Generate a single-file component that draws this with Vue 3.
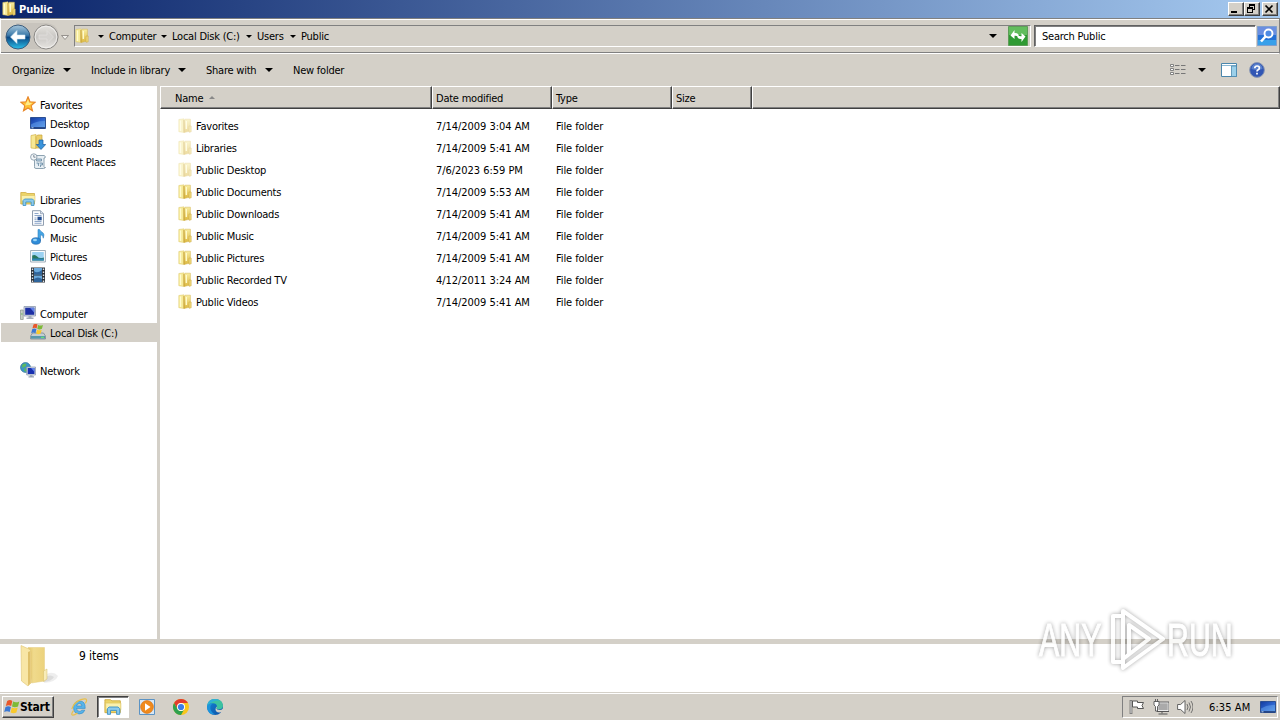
<script setup>
import { ref } from 'vue'

const selected = ref('Local Disk (C:)')
const search = ref('Search Public')

const crumbs = [
  { label: 'Computer', width: 47 },
  { label: 'Local Disk (C:)', width: 69 },
  { label: 'Users', width: 28 },
  { label: 'Public', width: 28 },
]

const groups = [
  { name: 'Favorites', icon: 'star', items: [
    { name: 'Desktop', icon: 'desktop' },
    { name: 'Downloads', icon: 'downloads' },
    { name: 'Recent Places', icon: 'recent' },
  ] },
  { name: 'Libraries', icon: 'library', items: [
    { name: 'Documents', icon: 'document' },
    { name: 'Music', icon: 'music' },
    { name: 'Pictures', icon: 'picture' },
    { name: 'Videos', icon: 'video' },
  ] },
  { name: 'Computer', icon: 'computer', items: [
    { name: 'Local Disk (C:)', icon: 'disk' },
  ] },
  { name: 'Network', icon: 'network', items: [] },
]

const files = [
  { name: 'Favorites', date: '7/14/2009 3:04 AM', hidden: true },
  { name: 'Libraries', date: '7/14/2009 5:41 AM', hidden: true },
  { name: 'Public Desktop', date: '7/6/2023 6:59 PM', hidden: true },
  { name: 'Public Documents', date: '7/14/2009 5:53 AM' },
  { name: 'Public Downloads', date: '7/14/2009 5:41 AM' },
  { name: 'Public Music', date: '7/14/2009 5:41 AM' },
  { name: 'Public Pictures', date: '7/14/2009 5:41 AM' },
  { name: 'Public Recorded TV', date: '4/12/2011 3:24 AM' },
  { name: 'Public Videos', date: '7/14/2009 5:41 AM' },
]

const pinned = ['ie', 'library', 'player', 'chrome', 'edge']
</script>

<template>
  <div class="screen">
    <!-- icon sprite -->
    <svg class="sprite" width="0" height="0">
      <defs>
        <linearGradient id="g-blue" x1="0" y1="0" x2="0" y2="1">
          <stop offset="0" stop-color="#a9c8dc" /><stop offset=".42" stop-color="#3f7cab" />
          <stop offset=".52" stop-color="#0b4a86" /><stop offset="1" stop-color="#2cc0ea" />
        </linearGradient>
        <linearGradient id="g-grey" x1="0" y1="0" x2="0" y2="1">
          <stop offset="0" stop-color="#e6e4e0" /><stop offset=".5" stop-color="#c8c6c3" /><stop offset="1" stop-color="#e8e6e2" />
        </linearGradient>
        <linearGradient id="g-folder" x1="0" y1="0" x2="0" y2="1">
          <stop offset="0" stop-color="#f8eda0" /><stop offset="1" stop-color="#dcb840" />
        </linearGradient>
        <linearGradient id="g-big" x1="0" y1="0" x2="1" y2="0">
          <stop offset="0" stop-color="#e2c468" /><stop offset=".35" stop-color="#f0da8c" /><stop offset="1" stop-color="#ecd27c" />
        </linearGradient>
        <linearGradient id="g-screen" x1="0" y1="0" x2="1" y2="1">
          <stop offset="0" stop-color="#143a9c" /><stop offset=".5" stop-color="#2b62cc" /><stop offset="1" stop-color="#5fa0e8" />
        </linearGradient>
        <linearGradient id="g-edge" x1="0" y1="0" x2="1" y2="1">
          <stop offset="0" stop-color="#1587d8" /><stop offset="1" stop-color="#0c4fa4" />
        </linearGradient>
      </defs>
      <symbol id="i-folder" viewBox="0 0 16 16">
        <path d="M1.800 1.500 7 .8v13.700l-5.200-.8z" fill="#f6ea98" stroke="#dcc668" stroke-width=".5" />
        <path d="M7 2.500 8 1.200h5.400V13L7 14.600z" fill="url(#g-folder)" stroke="#d2b24c" stroke-width=".5" />
        <path d="M7 2v12.300" stroke="#c49c30" stroke-width=".8" />
        <path d="M12 8h2.200v5.800l-2.200.5z" fill="#efd878" stroke="#c9a740" stroke-width=".5" />
        <path d="M3.500 2.500v10.500M9.300 3v8" stroke="#fffbd0" stroke-width="1.300" />
      </symbol>
      <symbol id="i-star" viewBox="0 0 16 16">
        <path d="M8 .8l2 4.900 5.200.5-4 3.400 1.300 5.200L8 12l-4.500 2.800 1.300-5.200-4-3.400 5.200-.5z" fill="#ffc136" stroke="#e8862a" stroke-width="1.100" />
        <path d="M8 3.500l1.200 3.200 3 .4-2.500 2L8 9 5 9.500z" fill="#ffeb8a" />
      </symbol>
      <symbol id="i-desktop" viewBox="0 0 16 16">
        <path d="M.5 2.500h15v11H.5z" fill="url(#g-screen)" stroke="#2c4f92" />
        <path d="M1 9.500q6-4 14-3.500v6H1z" fill="#6aa6ec" opacity=".5" />
        <path d="M1 12.800h14" stroke="#1c3468" /><path d="M1.500 12.800h2" stroke="#b8d6f4" />
      </symbol>
      <symbol id="i-downloads" viewBox="0 0 16 16">
        <path d="M1 1.500 6 .5v14L1 14z" fill="#f7e894" stroke="#d2b34a" stroke-width=".7" />
        <path d="M6 2.500 7.500 1H12v13H6z" fill="#eccf6a" stroke="#c9a437" stroke-width=".7" />
        <path d="M9 6h4v4.500h2.700l-4.700 5-4.700-5H9z" fill="#3a94dc" stroke="#1b5c9e" stroke-width=".7" />
      </symbol>
      <symbol id="i-recent" viewBox="0 0 16 16">
        <path d="M4.500 2.500h9.500q2 .5 1 2.500h-1v8.500q0 1.500 1.500 1-1 1-2 1H6q-2 0-1.500-2z" fill="#e8eff4" stroke="#8298a8" stroke-width=".9" />
        <path d="M6.500 6h5v2h-5zM6.500 10h2v3M9.500 10h3v2h-2v2" fill="#bed6e8" stroke="#6989a0" stroke-width=".8" />
        <circle cx="3.800" cy="4" r="3.200" fill="#f4f7f9" stroke="#8b9dab" stroke-width=".9" />
        <path d="M3.800 2v2.200H5.500" fill="none" stroke="#5f7080" stroke-width=".8" />
      </symbol>
      <symbol id="i-library" viewBox="0 0 16 16">
        <path d="M.8 3V1.500h5l1.200 1h7.500V13H.8z" fill="#ecd468" stroke="#cfab42" stroke-width=".8" />
        <path d="M1.500 4.500h13.500v6H1.500z" fill="#faf0ad" stroke="#d9bf58" stroke-width=".5" />
        <path d="M3 14.500V9.500l1.500-1.500h8l1.500 1.500v5h-2.800V11H5.800v3.500z" fill="#8ccaec" stroke="#398fc4" stroke-width=".8" />
      </symbol>
      <symbol id="i-document" viewBox="0 0 16 16">
        <path d="M2.500.7h8l3 3v11.600h-11z" fill="#fafcfe" stroke="#8494a8" stroke-width=".9" />
        <path d="M10.500.7v3h3" fill="#d8e2ee" stroke="#8494a8" stroke-width=".7" />
        <path d="M4.500 3.500h4M4.500 5.500h7M4.500 11.500h7M4.500 13.300h7M4.500 8h2M4.500 9.700h2" stroke="#7492bc" stroke-width=".8" />
        <path d="M7.500 6.700h4.200v3.600H7.500z" fill="#244f92" />
      </symbol>
      <symbol id="i-music" viewBox="0 0 16 16">
        <path d="M8 12V.5h1.500q1.200 2.200 3.300 3.200 2 1.400.5 5.500.2-3-2.800-3.500v6z" fill="#45a5e4" stroke="#2f80c0" stroke-width=".6" />
        <ellipse cx="6" cy="12" rx="4.500" ry="3.300" fill="#2f8cd8" stroke="#1b62a6" stroke-width=".6" />
        <ellipse cx="5" cy="11" rx="2" ry="1.200" fill="#9ad4f6" />
      </symbol>
      <symbol id="i-picture" viewBox="0 0 16 16">
        <path d="M.6 2.500h14.800v11.500H.6z" fill="#fcfdfe" stroke="#8a9aa8" stroke-width=".8" />
        <path d="M2.200 4h11.600v8.500H2.200z" fill="#9cd2f2" />
        <path d="M2.200 7.500q3-1.500 5 1t6.600 1V12.500H2.200z" fill="#28765c" />
        <path d="M2.200 10.500h11.600v2H2.200z" fill="#2f86b8" />
      </symbol>
      <symbol id="i-video" viewBox="0 0 16 16">
        <path d="M1 .5h14v15H1z" fill="#2b3038" />
        <path d="M4 1h8v6.500H4zM4 8.500h8V15H4z" fill="#6aa9dc" />
        <path d="M4 4q3 3 8-1v4.500H4zM4 12q4-3 8 0v3H4z" fill="#2f659c" />
        <path d="M2.500 1.500v14M13.500 1.500v14" stroke="#dfe5ea" stroke-width="1.400" stroke-dasharray="1.500 1.500" />
      </symbol>
      <symbol id="i-computer" viewBox="0 0 16 16">
        <path d="M.5 5h2.700v9.500H.5z" fill="#c8d0c6" stroke="#87928a" stroke-width=".7" /><path d="M1.200 9h1.300" stroke="#53b04c" />
        <path d="M4 1.500h11.500v9.500H4z" fill="#d5dbe4" stroke="#8c98ac" stroke-width=".8" />
        <path d="M5.200 2.700h9.100v7.100H5.200z" fill="#1c2fa4" /><path d="M10 2.700h4.300v5z" fill="#6080e4" />
        <path d="M8.500 11h3v1.500h2V14h-7v-1.500h2z" fill="#a3acba" />
      </symbol>
      <symbol id="i-flag4" viewBox="0 0 16 16">
        <path d="M3.200 2Q6 .2 8.300 2L7.200 7Q4.700 5.300 1.800 7z" fill="#e8572a" />
        <path d="M9.100 2.600q2.900 1.600 6.200-.2L14 7.500Q10.800 9 8 7.500z" fill="#7dba38" />
        <path d="M1.500 8Q4.300 6.300 6.900 8L5.700 13Q3 11.300.2 13z" fill="#3a78d4" />
        <path d="M7.800 8.500q2.800 1.600 5.900.1L12.400 13.500q-2.900 1.600-5.800 0z" fill="#f9c92c" />
      </symbol>
      <symbol id="i-disk" viewBox="0 0 16 16">
        <path d="M2.500 9h11l2 3v3H.6v-3z" fill="#c4cdd2" stroke="#6e7f8a" stroke-width=".7" />
        <path d="M1 12h14v2.600H1z" fill="#5798ac" /><path d="M11 13.300h3" stroke="#6cf06c" />
        <use href="#i-flag4" x="1" y="-1" width="12.500" height="12.500" />
      </symbol>
      <symbol id="i-network" viewBox="0 0 16 16">
        <circle cx="5.500" cy="5.500" r="5" fill="#3c95c8" stroke="#23688c" stroke-width=".6" />
        <path d="M2 3q2.500-2.500 4.500-1l-1 2.500-3 1.500zM5 6l3.500 1-2 3L4 9z" fill="#5cba60" />
        <path d="M6.700 5h8.800v8H6.700z" fill="#d8dee6" stroke="#8794aa" stroke-width=".7" />
        <path d="M7.700 6h6.800v6H7.700z" fill="#1830b0" /><path d="M11 6h3.500v4z" fill="#5f82ea" />
        <path d="M10 13.200h2.500v1H14v1.200H8.500v-1.200H10z" fill="#98a3b2" />
      </symbol>
      <symbol id="i-ie" viewBox="0 0 18 18">
        <path d="M15.200 10.400H6.500q.2 3 3 3 1.600 0 2.300-1.200h3q-1.300 3.700-5.300 3.700-5.900 0-5.900-6.400t6-6.500q5.900 0 5.600 7.400zM6.600 8h5.400q-.2-2.500-2.600-2.500T6.600 8z" fill="#58b4ea" stroke="#2c88c8" stroke-width=".6" />
        <path d="M3.500 12.500Q.8 16.500 2.300 17q1.700.5 5.200-2M1.800 11Q4 4 11 1.600q5.500-1.900 5.600.6 0 1.300-1.400 3.200" fill="none" stroke="#e8c04c" stroke-width="1.200" />
      </symbol>
      <symbol id="i-player" viewBox="0 0 18 18">
        <path d="M1.500 1.500h15v15h-15z" fill="#d8e7f4" stroke="#5b93c4" />
        <circle cx="9" cy="9" r="6.400" fill="#f08a1c" stroke="#d0690c" stroke-width=".6" />
        <path d="M7 5.300 12.500 9 7 12.700z" fill="#fff" />
      </symbol>
      <symbol id="i-chrome" viewBox="0 0 18 18">
        <circle cx="9" cy="9" r="8" fill="#f9c61c" />
        <path d="M2.070 5A8 8 0 0 1 15.930 5H9a4 4 0 0 0-3.460 6z" fill="#e23b2e" />
        <path d="M2.070 5A8 8 0 0 0 9 17l3.460-6a4 4 0 0 1-6.920 0z" fill="#2fa14f" />
        <circle cx="9" cy="9" r="4" fill="#fff" /><circle cx="9" cy="9" r="3.100" fill="#3b7de8" />
      </symbol>
      <symbol id="i-edge" viewBox="0 0 18 18">
        <circle cx="9" cy="9" r="8" fill="url(#g-edge)" />
        <path d="M1.200 8Q2 1.200 9 1q7.500.3 8 6.500 0 3.500-3.500 3.800-2.800.2-3.300-1 .8-.8.8-2Q10.500 5.500 7 5.300 3 5.200 1.200 8z" fill="#3cc2a0" />
        <path d="M1.200 8Q2 1.200 9 1q3 .1 5 1.500Q6 2 1.200 8z" fill="#2fb0d8" />
        <path d="M1.200 8Q3 5.200 7 5.300q-3 1.600-2.600 5.200.6 4 5 6Q1.500 17 1 9z" fill="#1c94dc" />
        <path d="M10.200 10.300q.4 1.600 3.300 1.600 2 0 3.500-1.200v2.500q-2 1.500-4 1.300-3.500-.4-3.500-3.300 0-1.500 1.500-2.800 0 1-.8 1.900z" fill="#d4d0c8" />
      </symbol>
    </svg>

    <header class="titlebar">
      <svg class="ico"><use href="#i-folder" /></svg>
      <span class="caption">Public</span>
      <div class="winbtns">
        <button class="winbtn"><svg viewBox="0 0 12 10"><path d="M2 7h6v2H2z" /></svg></button>
        <button class="winbtn"><svg viewBox="0 0 12 10"><path d="M4 0h6v6H8V5h1V2H5v1H4zM2 3h6v6H2zM3 5v3h4V5z" fill-rule="evenodd" /></svg></button>
        <button class="winbtn close"><svg viewBox="0 0 12 10"><path d="M2.500 1.500l7 7M9.500 1.500l-7 7" stroke="#000" stroke-width="1.700" /></svg></button>
      </div>
    </header>

    <nav class="navbar">
      <svg class="travel" viewBox="0 0 70 32">
        <path d="M16 3h30q12 1 13 13-1 13-13 13H16z" fill="#bdbab4" opacity=".55" />
        <circle cx="18" cy="17" r="12" fill="url(#g-blue)" stroke="#3c5c7c" />
        <path d="M10.500 17l6.500-6.500v4.500h8v4h-8v4.500z" fill="#fff" stroke="#d2e6f4" stroke-width=".6" />
        <circle cx="46" cy="17" r="12" fill="url(#g-grey)" stroke="#8b8986" />
        <circle cx="46" cy="17" r="10.800" fill="none" stroke="#f4f3f1" stroke-width=".8" />
        <path d="M53.500 17L47 10.500V15h-8v4h8v4.500z" fill="#d4d2cf" stroke="#e4e2df" stroke-width=".7" />
        <path d="M61.500 15.500h7l-3.500 4z" fill="#f4f2ee" stroke="#8c8984" stroke-width=".9" />
      </svg>
      <div class="address">
        <svg class="ico"><use href="#i-folder" /></svg>
        <span v-for="crumb in crumbs" :key="crumb.label" class="crumb">
          <i class="caret small"></i>
          <span :style="{ width: crumb.width + 'px' }">{{ crumb.label }}</span>
        </span>
        <i class="caret drop"></i>
        <svg class="refresh" viewBox="0 0 20 20">
          <path d="M.5.500h19v19H.5z" fill="#2f9a33" stroke="#5d9c58" /><path d="M1 1h18v8H1z" fill="#62bd5e" />
          <path d="M2.500 9.500l4-5.500v3q4.500-.5 4.500 4.500-1.500-2-4.500-1.700v3.200zM17.500 10.500l-4 5.500v-3q-4.500.5-4.500-4.500 1.500 2 4.500 1.700V7z" fill="#fff" />
        </svg>
      </div>
      <input v-model="search" class="search" type="text">
      <svg class="go" viewBox="0 0 20 20">
        <path d="M.5.500h19v19H.5z" fill="#2470d6" stroke="#7f9fcc" /><path d="M1 1h18v8H1z" fill="#6a8ee0" /><path d="M1 14h18v5H1z" fill="#38a0ea" />
        <circle cx="11.500" cy="7.500" r="4" fill="#4f8be4" stroke="#fff" stroke-width="1.900" /><path d="M8.500 10.500l-4.500 5" stroke="#fff" stroke-width="2.600" />
      </svg>
    </nav>

    <div class="toolbar">
      <button class="tool organize">Organize<i class="caret"></i></button>
      <button class="tool include">Include in library<i class="caret"></i></button>
      <button class="tool share">Share with<i class="caret"></i></button>
      <button class="tool">New folder</button>
      <div class="viewtools">
        <svg class="views" viewBox="0 0 16 14">
          <path d="M.5 1.500h3v2h-3zM.5 5.500h3v2h-3zM.5 9.500h3v2h-3z" fill="#fff" stroke="#777" stroke-width=".9" />
          <path d="M5 2.500h4.500M11 2.500h4.500M5 6.500h4.500M11 6.500h4.500M5 10.500h4.500M11 10.500h4.500" stroke="#777" />
        </svg>
        <i class="caret"></i>
        <svg class="pane" viewBox="0 0 16 14">
          <path d="M.5.500h15v13H.5z" fill="#fff" stroke="#4a86ac" /><path d="M1 2.500h14" stroke="#8ab8d4" />
          <path d="M10.500 3v10.500h5V3z" fill="#9bd0ea" stroke="#4a86ac" stroke-width=".8" />
        </svg>
        <svg class="help" viewBox="0 0 16 16">
          <circle cx="8" cy="8" r="7.400" fill="#3156b4" stroke="#8b98b4" /><path d="M2.500 7a5.500 5.500 0 0 1 11 0q-5.500 2-11 0z" fill="#5a80cc" />
          <path d="M5.800 6.300q0-2.300 2.300-2.300t2.300 2q0 1.200-1.200 1.800T8 9.500M8 10.800v1.700" fill="none" stroke="#fff" stroke-width="1.700" />
        </svg>
      </div>
    </div>

    <main class="body">
      <aside class="tree">
        <section v-for="group in groups" :key="group.name" class="group">
          <div class="node">
            <svg class="ico"><use :href="'#i-' + group.icon" /></svg>{{ group.name }}
          </div>
          <div v-for="item in group.items" :key="item.name" class="node child"
            :class="{ selected: item.name === selected }" @click="selected = item.name">
            <svg class="ico"><use :href="'#i-' + item.icon" /></svg>{{ item.name }}
          </div>
        </section>
      </aside>

      <div class="list">
        <div class="grid heads">
          <div class="head first">Name<i class="sort"></i></div>
          <div class="head">Date modified</div>
          <div class="head">Type</div>
          <div class="head">Size</div>
          <div class="head"></div>
        </div>
        <div class="rows">
          <div v-for="file in files" :key="file.name" class="grid row">
            <div class="name">
              <svg class="ico" :class="{ faded: file.hidden }"><use href="#i-folder" /></svg>{{ file.name }}
            </div>
            <div class="date">{{ file.date }}</div>
            <div class="type">File folder</div>
          </div>
        </div>
      </div>
    </main>

    <section class="details">
      <svg class="bigfolder" viewBox="0 0 44 44">
        <path d="M27 31q8-5 13 1-2 6-14 7z" fill="#777" opacity=".12" />
        <path d="M27 33q6-3 9 0-2 4-10 5z" fill="#777" opacity=".15" />
        <path d="M10 3.500h16.500V37l-13 2z" fill="url(#g-big)" stroke="#e4cc80" stroke-width=".5" />
        <path d="M25.500 27l3.500-2v10l-3.500 2.500z" fill="#f8ecb8" stroke="#d4bc68" stroke-width=".5" />
        <path d="M3 1.500 11 5q2 1 2 3v31l-3 3-6.500-5z" fill="#f8e6a6" stroke="#dfc474" stroke-width=".6" />
        <path d="M12.500 7v32l-2.500 2.500V8z" fill="#dfc06a" />
      </svg>
      <span>9 items</span>
    </section>

    <footer class="taskbar">
      <button class="start"><svg><use href="#i-flag4" /></svg>Start</button>
      <div class="pins">
        <div v-for="pin in pinned" :key="pin" class="pin" :class="{ active: pin === 'library' }">
          <svg><use :href="'#i-' + pin" /></svg>
        </div>
      </div>
      <div class="tray">
        <svg viewBox="0 0 16 16">
          <path d="M2 1v14" stroke="#555" stroke-width="2.600" /><path d="M2 1.500v13" stroke="#fff" />
          <path d="M3.500 2h5v1.500h6l-1.500 3 1.500 3h-6V8h-5z" fill="#fff" stroke="#555" />
        </svg>
        <svg viewBox="0 0 16 16">
          <path d="M4.500 3.500h11v8.500h-11z" fill="#aaa" stroke="#fff" stroke-width="1.500" /><path d="M4 3h12v9.500H4zM9 12.500v2M5.500 15h9" fill="none" stroke="#555" />
          <path d="M1 2.500h5V6L4.500 7.500v4.500H2.500V7.500L1 6zM2.500 0v2.500M4.500 0v2.500" fill="#fff" stroke="#555" stroke-width=".9" />
        </svg>
        <svg viewBox="0 0 16 16">
          <path d="M.6 5.500h3L8 1.500v13l-4.400-4h-3z" fill="#fff" stroke="#555" stroke-width=".9" />
          <path d="M10 5q2 3 0 6M12 3.500q3 4.500 0 9M14 2q4 6 0 12" fill="none" stroke="#666" stroke-width=".9" />
        </svg>
        <span class="clock">6:35 AM</span>
        <svg class="show"><use href="#i-desktop" /></svg>
      </div>
    </footer>

    <div class="watermark">
      <span>ANY</span>
      <svg viewBox="0 0 60 66">
        <path d="M14 9H6v46h8M16 60V4l40 28-40 29v-9l26-20-20-14v29" fill="none" stroke="#fff" stroke-width="4" stroke-linejoin="round" />
      </svg>
      <span class="run">RUN</span>
    </div>
  </div>
</template>

<style>
body {
  overflow: hidden;
}
</style>

<style scoped>
.screen {
  position: relative;
  width: 1280px;
  height: 720px;
  display: flex;
  flex-direction: column;
  overflow: hidden;
  background: #d4d0c8;
  color: #000;
  font-family: "DejaVu Sans Condensed", "DejaVu Sans", sans-serif;
  font-stretch: condensed;
  font-size: 11px;
  letter-spacing: -0.23px;
  white-space: nowrap;
}

.screen * {
  box-sizing: border-box;
}

.sprite {
  position: absolute;
}

svg {
  display: block;
  flex: none;
}

button {
  font: inherit;
  letter-spacing: inherit;
  color: inherit;
  border: none;
  background: none;
  padding: 0;
}

.ico {
  width: 16px;
  height: 16px;
}

.titlebar {
  height: 18px;
  display: flex;
  align-items: center;
  padding: 0 2px 0 1px;
  background: linear-gradient(to right, #0a246a, #a6caf0);
}

.caption {
  margin-left: 2px;
  color: #fff;
  font-weight: bold;
  letter-spacing: -0.1px;
}

.winbtns {
  display: flex;
  margin-left: auto;
}

.winbtn {
  width: 16px;
  height: 14px;
  background: #d4d0c8;
  border: 1px solid;
  border-color: #fff #404040 #404040 #fff;
  box-shadow: inset -1px -1px #808080;
}

.winbtn svg {
  width: 12px;
  height: 10px;
}

.close {
  margin-left: 2px;
}

.navbar {
  height: 36px;
  display: flex;
  align-items: center;
  padding: 0 2px 0 1px;
  border: 1px solid;
  border-color: #808080 #808080 #fff #fff;
  box-shadow: inset 0 1px #fff, inset 0 -1px #808080;
}

.travel {
  width: 70px;
  height: 32px;
  margin-left: -2px;
}

.address {
  display: flex;
  align-items: center;
  width: 957px;
  height: 22px;
  margin-left: 4px;
  border: 1px solid;
  border-color: #808080 #fff #fff #808080;
}

.address .ico {
  margin: 0 8px 0 -1px;
}

.crumb {
  display: flex;
  align-items: center;
}

.crumb .caret {
  margin: 0 5px 0 0;
}

.crumb span {
  margin-right: 5px;
}

.caret {
  display: inline-block;
  border: 4px solid transparent;
  border-top-color: #000;
  border-bottom: none;
}

.caret.small {
  border-width: 3px 3px 0;
}

.caret.drop {
  margin-left: auto;
}

.refresh {
  width: 20px;
  height: 20px;
  margin: 0 2px 0 11px;
}

.search {
  width: 222px;
  height: 22px;
  margin-left: 3px;
  padding: 0 0 0 7px;
  border: 1px solid;
  border-color: #606060 #fff #fff #606060;
  box-shadow: inset 1px 1px #808080;
  font: inherit;
  letter-spacing: inherit;
  background: #fff;
  outline: none;
}

.go {
  width: 20px;
  height: 20px;
  margin-left: auto;
}

.toolbar {
  height: 32px;
  display: flex;
  align-items: center;
  padding: 0 15px 0 12px;
}

.tool {
  display: flex;
  align-items: center;
}

.tool .caret {
  margin-left: auto;
}

.organize {
  width: 59px;
  margin-right: 20px;
}

.include {
  width: 95px;
  margin-right: 20px;
}

.share {
  width: 67px;
  margin-right: 20px;
}

.viewtools {
  display: flex;
  align-items: center;
  margin-left: auto;
}

.views,
.pane {
  width: 16px;
  height: 14px;
}

.viewtools .caret {
  margin: 0 15px 0 12px;
}

.help {
  width: 16px;
  height: 16px;
  margin-left: 12px;
}

.body {
  display: flex;
  height: 553px;
}

.tree {
  width: 160px;
  padding-top: 9px;
  background: #fff;
  border-right: 3px solid #d4d0c8;
}

.group {
  margin-bottom: 19px;
}

.node {
  height: 19px;
  display: flex;
  align-items: center;
  gap: 4px;
  padding: 1px 0 0 20px;
}

.node .ico {
  margin-top: -2px;
}

.child {
  margin-left: 1px;
  padding-left: 29px;
}

.selected {
  background: #d4d0c8;
}

.list {
  flex: 1;
  background: #fff;
}

.grid {
  display: grid;
  grid-template-columns: 272px 120px 120px 80px 1fr;
  align-items: center;
}

.heads {
  height: 23px;
  align-items: stretch;
}

.head {
  display: flex;
  align-items: center;
  padding: 2px 0 0 3px;
  background: #d4d0c8;
  border: 1px solid;
  border-color: #fff #404040 #404040 #fff;
  box-shadow: inset -1px -1px #808080;
}

.first {
  padding-left: 14px;
}

.sort {
  margin: -3px 0 0 6px;
  border: 3px solid transparent;
  border-bottom-color: #888;
  border-top: none;
}

.rows {
  padding-top: 6px;
}

.row {
  height: 22px;
}

.row > div {
  padding-left: 4px;
}

.row .name {
  display: flex;
  align-items: center;
  gap: 3px;
  padding-left: 17px;
}

.date {
  letter-spacing: -0.04px;
}

.type {
  letter-spacing: -0.1px;
}

.faded {
  opacity: 0.5;
}

.details {
  height: 53px;
  display: flex;
  padding-left: 18px;
  border-top: 5px solid #d4d0c8;
  background: #fff;
  font-size: 12px;
  letter-spacing: -0.1px;
}

.details span {
  margin: 5px 0 0 17px;
}

.bigfolder {
  width: 44px;
  height: 44px;
}

.taskbar {
  height: 28px;
  display: flex;
  align-items: center;
  padding: 1px 2px 0 2px;
  border-top: 1px solid #d4d0c8;
  box-shadow: inset 0 1px #fff;
}

.start {
  width: 52px;
  height: 22px;
  display: flex;
  align-items: center;
  padding-left: 1px;
  font-weight: bold;
  font-size: 12px;
  border: 1px solid;
  border-color: #fff #404040 #404040 #fff;
  box-shadow: inset -1px -1px #808080;
}

.start svg {
  width: 16px;
  height: 16px;
}

.pins {
  display: flex;
  gap: 2px;
  margin-left: 9px;
}

.pin {
  width: 32px;
  height: 22px;
  display: grid;
  place-items: center;
}

.pin svg {
  width: 18px;
  height: 18px;
}

.active {
  background: #fff;
  border: 1px solid;
  border-color: #404040 #fff #fff #404040;
  box-shadow: inset 1px 1px #808080;
}

.tray {
  width: 156px;
  height: 22px;
  display: flex;
  align-items: center;
  gap: 8px;
  margin-left: auto;
  padding-left: 6px;
  border: 1px solid;
  border-color: #808080 #fff #fff #808080;
}

.tray svg {
  width: 16px;
  height: 16px;
}

.clock {
  width: 43px;
  margin-left: 8px;
  letter-spacing: 0.1px;
}

.watermark {
  position: absolute;
  left: 1039px;
  top: 607px;
  display: flex;
  align-items: center;
  color: #fff;
  opacity: 0.85;
  font-family: "Liberation Sans", sans-serif;
  font-stretch: normal;
  font-size: 46px;
  letter-spacing: 0;
  -webkit-text-stroke: 1px #fff;
  filter: drop-shadow(0 0 2px rgba(0, 0, 0, 0.42));
}

.watermark span {
  width: 68px;
  transform: scaleX(0.66);
  transform-origin: left;
}

.watermark svg {
  width: 60px;
  height: 66px;
}
</style>
